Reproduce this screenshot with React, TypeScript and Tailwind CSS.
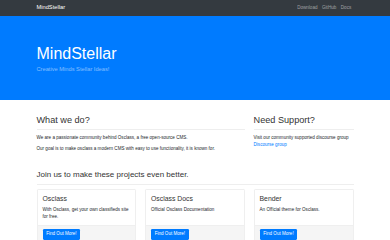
import React from "react";

const cards = [
  { title: "Osclass", text: "With Osclass, get your own classifieds site for free." },
  { title: "Osclass Docs", text: "Official Osclass Documentation" },
  { title: "Bender", text: "An Official theme for Osclass." },
];

export default function App() {
  return (
    <div className="w-full bg-white text-[#212529] font-['Liberation_Sans',Arial,sans-serif]">
      <nav className="h-[16px] bg-[#343a40]">
        <div className="mx-auto flex h-full w-[317px] items-center justify-between">
          <a className="text-[5.71px] leading-none text-white">MindStellar</a>
          <ul className="flex text-[4.57px] leading-none text-white/50">
            <li className="px-[2.29px]">Download</li>
            <li className="px-[2.29px]">GitHub</li>
            <li className="px-[2.29px]">Docs</li>
          </ul>
        </div>
      </nav>
      <header className="h-[84px] bg-[#007bff]">
        <div className="mx-auto w-[317px] pt-[27.6px]">
          <h1 className="mb-[2.29px] text-[16px] font-light leading-[1.2] text-white">MindStellar</h1>
          <p className="text-[5.71px] font-light leading-[1.5] text-white/50">Creative Minds Stellar Ideas!</p>
        </div>
      </header>
      <main className="mx-auto w-[317px] pt-[14.5px]">
        <div className="flex gap-[8.57px]">
          <section className="w-[208.6px]">
            <h2 className="border-b border-[#eeeeee] pb-[3.3px] text-[9.14px] leading-[1.2] text-[#333]">What we do?</h2>
            <p className="mt-[4.9px] mb-[4.57px] text-[4.57px] leading-[1.5]">
              We are a passionate community behind Osclass, a free open-source CMS.
            </p>
            <p className="mb-[4.57px] text-[4.57px] leading-[1.5]">
              Our goal is to make osclass a modern CMS with easy to use functionality, it is known for.
            </p>
          </section>
          <section className="w-[100px]">
            <h2 className="border-b border-[#eeeeee] pb-[3.3px] text-[9.14px] leading-[1.2] text-[#333]">Need Support?</h2>
            <p className="mt-[4.9px] text-[4.57px] leading-[1.5]">
              Visit our community supported discourse group
              <a className="block text-[#007bff]">Discourse group</a>
            </p>
          </section>
        </div>
        <h3 className="mt-[13px] border-b border-[#eeeeee] pb-[4px] text-[8px] leading-[1.2] text-[#333]">
          Join us to make these projects even better.
        </h3>
        <div className="mt-[4px] grid grid-cols-3 gap-[8.57px]">
          {cards.map((c) => (
            <div key={c.title} className="flex flex-col rounded-[1.14px] border border-[#efefef]">
              <div className="flex-1 px-[5px] pt-[5px] pb-[4.6px]">
                <h4 className="mb-[3.43px] text-[6.86px] leading-[1.2] text-[#333]">{c.title}</h4>
                <p className="text-[4.57px] leading-[1.5]">{c.text}</p>
              </div>
              <div className="flex border-t border-[#efefef] bg-[#f5f5f5] px-[5px] py-[3px]">
                <button className="rounded-[1.14px] bg-[#007bff] px-[3.7px] py-[2px] text-[4.57px] leading-[1.5] text-white">
                  Find Out More!
                </button>
              </div>
            </div>
          ))}
        </div>
      </main>
    </div>
  );
}
